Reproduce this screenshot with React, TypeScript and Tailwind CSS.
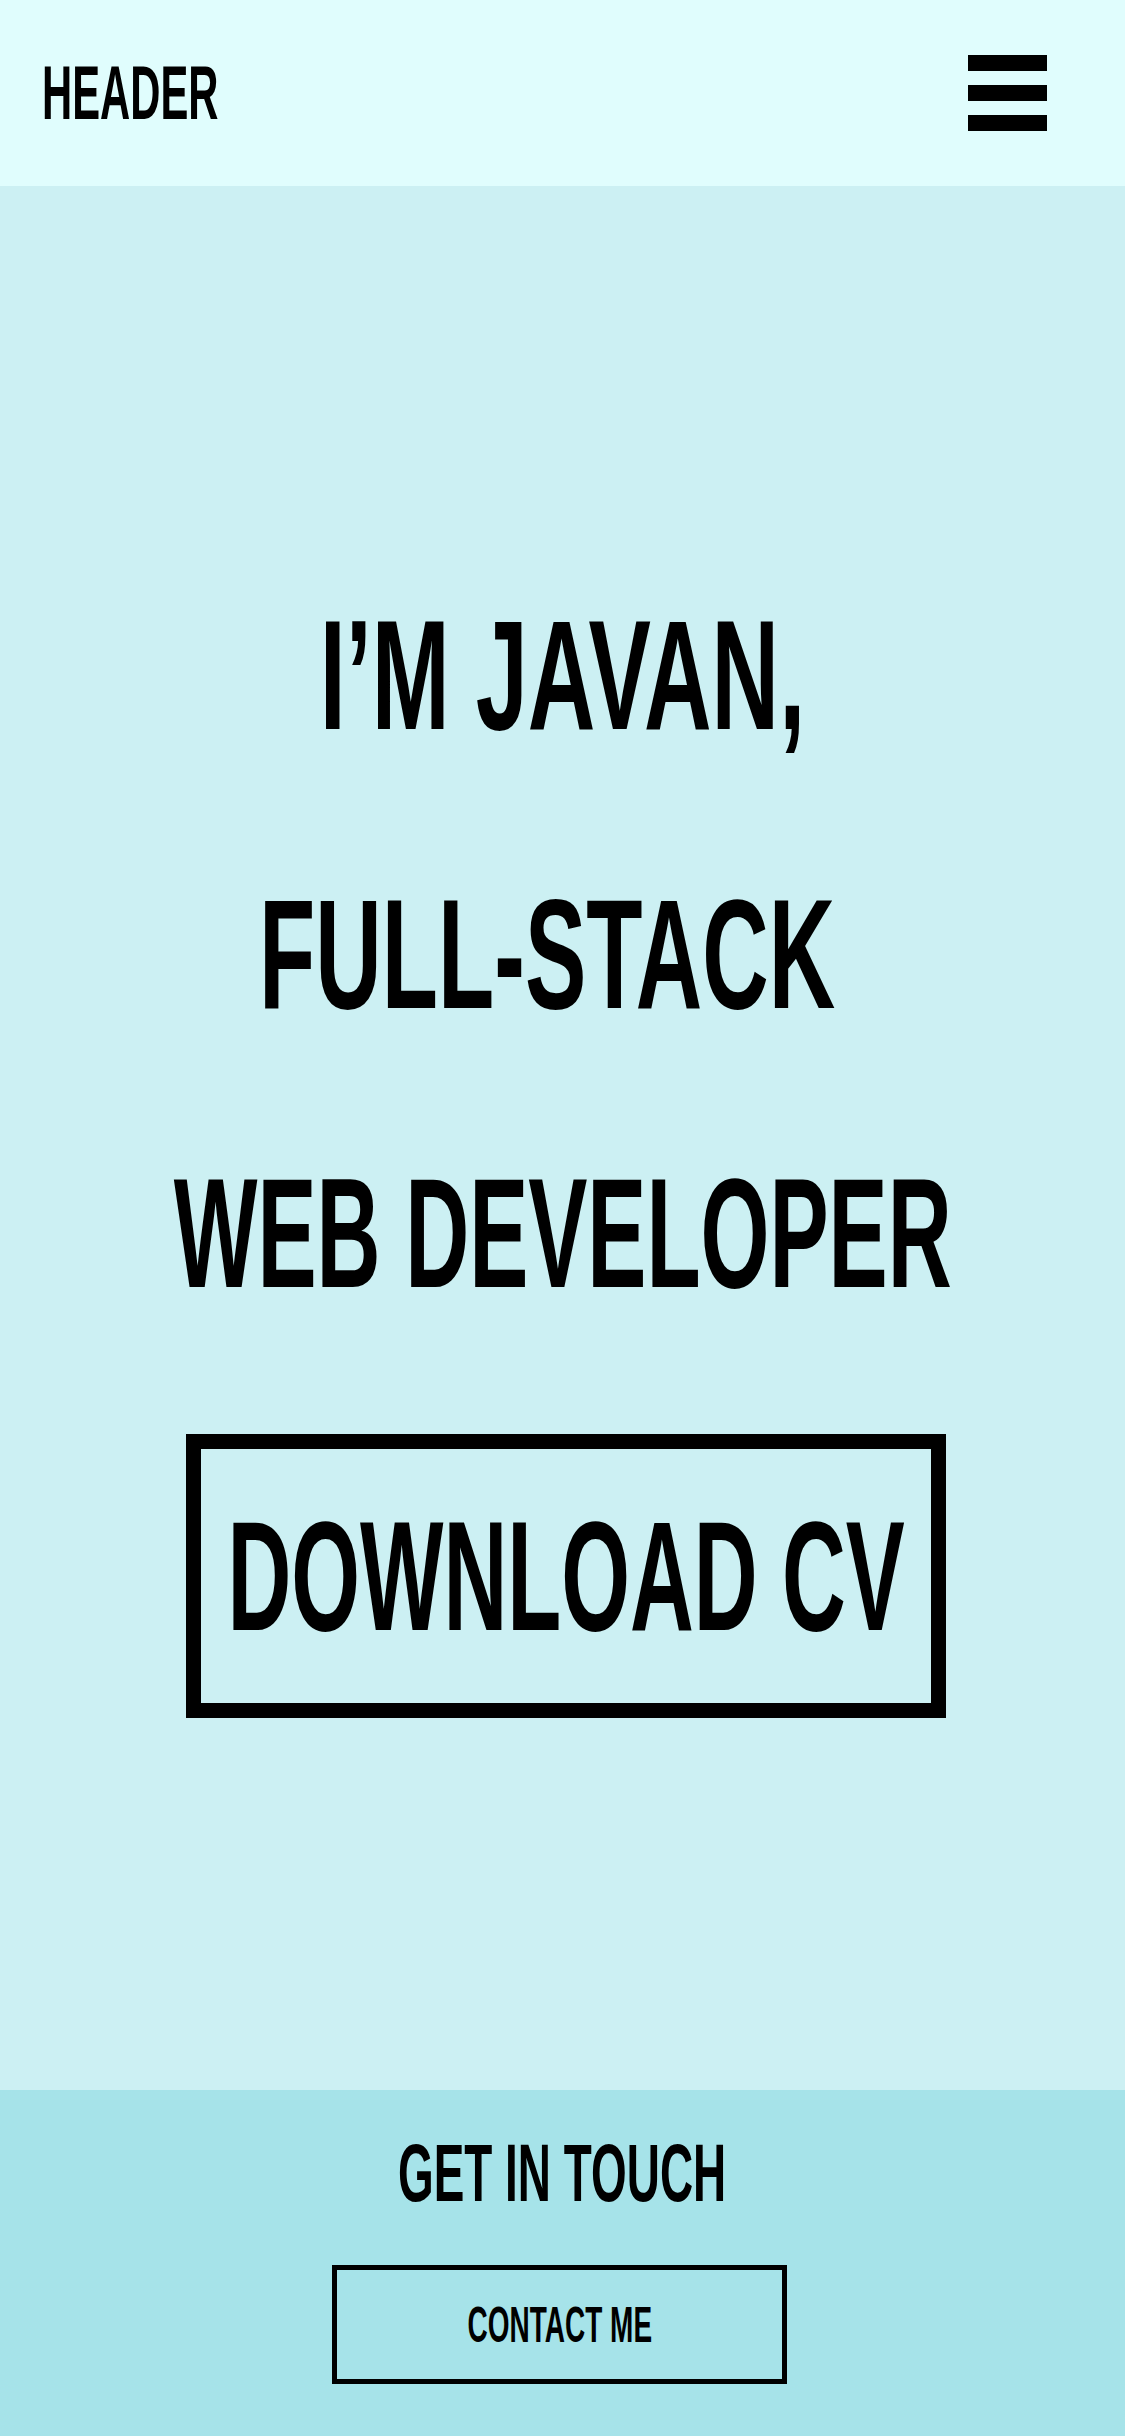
export default function App() {
  const font = "font-['Liberation_Sans',Arial,sans-serif] font-bold uppercase text-black whitespace-nowrap";

  return (
    <div className={`w-[1125px] min-h-[2436px] flex flex-col overflow-hidden ${font}`}>
      <header className="h-[186px] bg-[#e0fdfd] flex items-center justify-between pl-[42px] pr-[78px]">
        <span className="inline-block text-[76px] leading-none scale-x-[0.55] origin-left">Header</span>
        <button className="flex flex-col gap-[14px]" aria-label="menu">
          <span className="block w-[79px] h-[16px] bg-black" />
          <span className="block w-[79px] h-[16px] bg-black" />
          <span className="block w-[79px] h-[16px] bg-black" />
        </button>
      </header>

      <main className="h-[1904px] bg-[#ccf0f3] flex flex-col items-center pt-[350px] overflow-hidden">
        <h1 className="text-[156px] leading-[279px] flex flex-col items-center">
          <span className="inline-block scale-x-[0.6]">I’m Javan,</span>
          <span className="inline-block scale-x-[0.59] mr-[30px]">Full-Stack</span>
          <span className="inline-block scale-x-[0.568]">Web Developer</span>
        </h1>
        <a
          href="#"
          className="mt-[61px] ml-[7px] w-[760px] h-[284px] border-[15px] border-black flex items-center justify-center"
        >
          <span className="inline-block text-[155px] leading-none scale-x-[0.57]">Download CV</span>
        </a>
      </main>

      <footer className="h-[346px] bg-[#a6e3e9] flex flex-col items-center pt-[42px]">
        <h2 className="text-[82px] leading-none">
          <span className="inline-block scale-x-[0.56]">Get in touch</span>
        </h2>
        <a
          href="#"
          className="mt-[51px] mr-[6px] w-[455px] h-[119px] border-[5px] border-black flex items-center justify-center"
        >
          <span className="inline-block text-[50px] leading-none scale-x-[0.56]">Contact me</span>
        </a>
      </footer>
    </div>
  );
}
